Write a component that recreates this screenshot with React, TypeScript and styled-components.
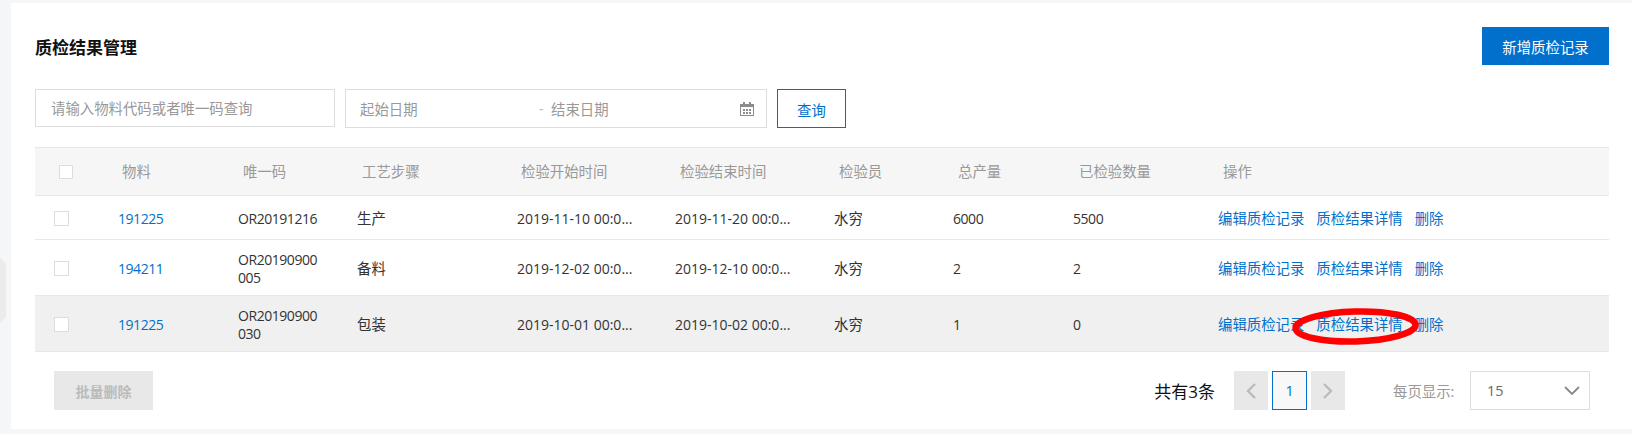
import React from "react";
import styled, { createGlobalStyle } from "styled-components";

const GlobalStyle = createGlobalStyle`
  html, body {
    margin: 0;
    padding: 0;
    height: 434px;
    overflow: hidden;
    background: #f5f6f8;
    font-family: "Open Sans", "Noto Sans CJK SC", sans-serif;
    font-size: 14.4px;
    color: #333;
  }
  * { box-sizing: border-box; }
`;

const SideTab = styled.div`
  position: absolute;
  left: 0;
  top: 258px;
  width: 6px;
  height: 65px;
  background: #ebebeb;
  clip-path: polygon(0 0, 100% 6px, 100% calc(100% - 6px), 0 100%);
`;

const Page = styled.div`
  padding: 3px 0 5px 11px;
  height: 434px;
`;

const Card = styled.div`
  background: #fff;
  height: 426px;
  padding: 24px 23px 0 24px;
`;

const TitleBar = styled.div`
  display: flex;
  justify-content: space-between;
  align-items: flex-start;
  height: 62px;
`;

const Title = styled.h2`
  margin: 9px 0 0;
  font-size: 17px;
  line-height: 24px;
  font-weight: 700;
  color: #111;
`;

const PrimaryButton = styled.button`
  width: 127px;
  height: 38px;
  border: 0;
  background: #0070cc;
  color: #fff;
  font: inherit;
`;

const FilterBar = styled.div`
  display: flex;
  gap: 10px;
  height: 39px;
`;

const TextInput = styled.input`
  width: 300px;
  height: 38px;
  border: 1px solid #ddd;
  padding: 0 15px;
  font: inherit;
  outline: none;
  &::placeholder { color: #999; }
`;

const DateRange = styled.div`
  display: flex;
  align-items: center;
  width: 422px;
  height: 39px;
  border: 1px solid #ddd;
  padding: 0 12px 0 14px;
  color: #999;
`;

const DateText = styled.span<{ $width: number }>`
  width: ${(p) => p.$width}px;
`;

const Dash = styled.span`
  width: 12px;
  color: #bbb;
`;

const CalendarIcon = styled.svg`
  width: 14px;
  height: 14px;
  margin-left: auto;
`;

const QueryButton = styled.button`
  width: 69px;
  height: 39px;
  padding: 2px 0 0;
  border: 1px solid #0070cc;
  background: #fff;
  color: #0070cc;
  font: inherit;
`;

const Table = styled.div`
  margin-top: 19px;
  --cols: 79px 120px 119px 160px 158px 159px 119px 120px 145px 395px;
`;

const HeadRow = styled.div`
  display: grid;
  grid-template-columns: var(--cols);
  align-items: center;
  height: 49px;
  background: #f6f6f6;
  border-top: 1px solid #e8e8e8;
  border-bottom: 1px solid #e8e8e8;
  color: #999;
`;

const HeadCell = styled.div<{ $pad?: number }>`
  padding-left: ${(p) => p.$pad ?? 8}px;
  position: relative;
  top: -1px;
`;

const BodyRow = styled.div<{ $height: number; $active?: boolean }>`
  display: grid;
  grid-template-columns: var(--cols);
  align-items: center;
  height: ${(p) => p.$height}px;
  padding-top: 2px;
  background: ${(p) => (p.$active ? "#f0f0f0" : "#fff")};
  border-bottom: 1px solid #e8e8e8;
`;

const Cell = styled.div`
  padding-left: 4px;
  line-height: 18px;
  color: #333;
  white-space: nowrap;
`;

// digits and latin in the reference run narrower than the CJK text
const DataCell = styled(Cell)`
  font-size: 14px;
  letter-spacing: -0.45px;
`;

const DateCell = styled(Cell)`
  font-size: 14px;
`;

const CheckCell = styled.div<{ $pad: number }>`
  padding-left: ${(p) => p.$pad}px;
  display: flex;
`;

const CheckBox = styled.span<{ $size: number }>`
  width: ${(p) => p.$size}px;
  height: ${(p) => p.$size}px;
  background: #fff;
  border: 1px solid #ddd;
`;

const LinkCell = styled(DataCell)`
  color: #0070cc;
`;

const Actions = styled.div`
  display: flex;
  gap: 12px;
  padding-left: 4px;
  position: relative;
  line-height: 20px;
`;

const ActionLink = styled.a`
  color: #0070cc;
  white-space: nowrap;
`;

const Mark = styled.svg`
  position: absolute;
  left: 76px;
  top: -9px;
  width: 131px;
  height: 41px;
  overflow: visible;
  pointer-events: none;
`;

const Footer = styled.div`
  display: flex;
  align-items: center;
  height: 39px;
  margin-top: 19px;
  padding: 0 19px;
`;

const BatchButton = styled.button`
  width: 99px;
  height: 39px;
  border: 0;
  background: #e8e8e8;
  color: #bbb;
  font: inherit;
  font-size: 14px;
  font-weight: 700;
`;

const Total = styled.span`
  margin-left: auto;
  margin-right: 19px;
  font-size: 17px;
  color: #111;
`;

const Pager = styled.div`
  display: flex;
  gap: 4px;
`;

const PageArrow = styled.div`
  display: flex;
  align-items: center;
  justify-content: center;
  width: 34px;
  height: 39px;
  background: #e8e8e8;
  color: #bbb;
`;

const PageCurrent = styled.div`
  display: flex;
  align-items: center;
  justify-content: center;
  width: 35px;
  height: 39px;
  border: 1px solid #0070cc;
  background: #f8f8f8;
  color: #0070cc;
`;

const SizeLabel = styled.span`
  width: 63px;
  margin-left: 48px;
  margin-right: 14px;
  color: #999;
  white-space: nowrap;
`;

const SizeSelect = styled.div`
  display: flex;
  align-items: center;
  justify-content: space-between;
  width: 120px;
  height: 39px;
  border: 1px solid #ddd;
  padding: 0 8px 0 16px;
  color: #666;
`;

const columns: [string, number?][] = [
  ["物料"],
  ["唯一码", 9],
  ["工艺步骤", 9],
  ["检验开始时间"],
  ["检验结束时间", 9],
  ["检验员", 9],
  ["总产量", 9],
  ["已检验数量", 10],
  ["操作", 9],
];

const rows = [
  { material: "191225", code: ["OR20191216"], step: "生产", start: "2019-11-10 00:0...", end: "2019-11-20 00:0...", total: "6000", checked: "5500", height: 44 },
  { material: "194211", code: ["OR20190900", "005"], step: "备料", start: "2019-12-02 00:0...", end: "2019-12-10 00:0...", total: "2", checked: "2", height: 56 },
  { material: "191225", code: ["OR20190900", "030"], step: "包装", start: "2019-10-01 00:0...", end: "2019-10-02 00:0...", total: "1", checked: "0", height: 56, active: true },
];

const App: React.FC = () => {
  return (
    <>
      <GlobalStyle />
      <SideTab />
      <Page>
        <Card>
          <TitleBar>
            <Title>质检结果管理</Title>
            <PrimaryButton>新增质检记录</PrimaryButton>
          </TitleBar>
          <FilterBar>
            <TextInput placeholder="请输入物料代码或者唯一码查询" />
            <DateRange>
              <DateText $width={179}>起始日期</DateText>
              <Dash>-</Dash>
              <DateText $width={100}>结束日期</DateText>
              <CalendarIcon viewBox="0 0 14 14">
                <path fill="#8c8c8c" d="M0 2h3V0h2v2h4V0h2v2h3v12H0z" />
                <path fill="#fff" d="M1 5h12v8H1z" />
                <path fill="#8c8c8c" d="M3 7h2v2H3zM6 7h2v2H6zM9 7h2v2H9zM3 10h2v2H3zM6 10h2v2H6zM9 10h2v2H9z" />
              </CalendarIcon>
            </DateRange>
            <QueryButton>查询</QueryButton>
          </FilterBar>
          <Table>
            <HeadRow>
              <CheckCell $pad={24}>
                <CheckBox $size={14} />
              </CheckCell>
              {columns.map(([label, pad]) => (
                <HeadCell key={label} $pad={pad}>
                  {label}
                </HeadCell>
              ))}
            </HeadRow>
            {rows.map((row, i) => (
              <BodyRow key={i} $height={row.height} $active={row.active}>
                <CheckCell $pad={19}>
                  <CheckBox $size={15} />
                </CheckCell>
                <LinkCell>{row.material}</LinkCell>
                <DataCell>
                  {row.code.map((part) => (
                    <div key={part}>{part}</div>
                  ))}
                </DataCell>
                <Cell>{row.step}</Cell>
                <DateCell>{row.start}</DateCell>
                <DateCell>{row.end}</DateCell>
                <Cell>水穷</Cell>
                <DataCell>{row.total}</DataCell>
                <DataCell>{row.checked}</DataCell>
                <Actions>
                  <ActionLink>编辑质检记录</ActionLink>
                  <ActionLink>质检结果详情</ActionLink>
                  <ActionLink>删除</ActionLink>
                  {row.active && (
                    <Mark viewBox="0 0 131 41">
                      <ellipse cx="65.5" cy="20.5" rx="60" ry="15" fill="none" stroke="#f00" strokeWidth="6.5" transform="rotate(-1.5 65.5 20.5)" />
                    </Mark>
                  )}
                </Actions>
              </BodyRow>
            ))}
          </Table>
          <Footer>
            <BatchButton>批量删除</BatchButton>
            <Total>共有3条</Total>
            <Pager>
              <PageArrow>
                <svg width="12" height="18" viewBox="0 0 12 18">
                  <path d="M10 2L3 9l7 7" fill="none" stroke="currentColor" strokeWidth="2.4" />
                </svg>
              </PageArrow>
              <PageCurrent>1</PageCurrent>
              <PageArrow>
                <svg width="12" height="18" viewBox="0 0 12 18">
                  <path d="M2 2l7 7-7 7" fill="none" stroke="currentColor" strokeWidth="2.4" />
                </svg>
              </PageArrow>
            </Pager>
            <SizeLabel>每页显示:</SizeLabel>
            <SizeSelect>
              15
              <svg width="18" height="10" viewBox="0 0 18 10">
                <path d="M2 1l7 7 7-7" fill="none" stroke="#888" strokeWidth="1.8" />
              </svg>
            </SizeSelect>
          </Footer>
        </Card>
      </Page>
    </>
  );
};

export default App;
